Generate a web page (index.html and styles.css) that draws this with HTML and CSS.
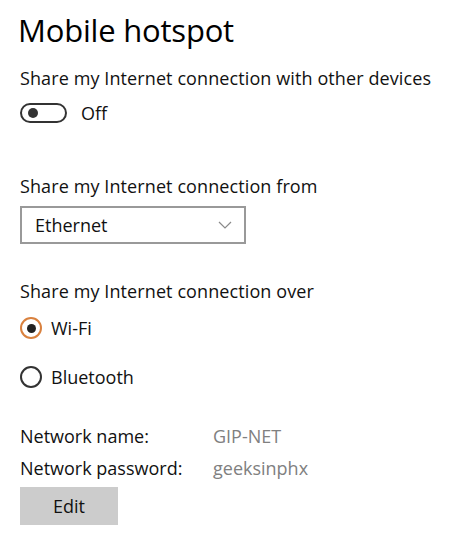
FILE: index.html
```html
<!DOCTYPE html>
<html lang="en">
<head>
    <meta charset="UTF-8">
    <title>Mobile hotspot</title>
    <link rel="stylesheet" href="styles.css">
</head>
<body>
    <h1>Mobile hotspot</h1>

    <p class="label">Share my Internet connection with other devices</p>
    <div class="toggle-row">
        <span class="toggle"><span class="knob"></span></span>
        <span class="toggle-text">Off</span>
    </div>

    <p class="label from">Share my Internet connection from</p>
    <div class="select">
        <span>Ethernet</span>
        <svg width="14" height="8" viewBox="0 0 14 8"><path d="M1 1 L7 7 L13 1" fill="none" stroke="#8a8a8a" stroke-width="1.2"/></svg>
    </div>

    <p class="label over">Share my Internet connection over</p>
    <div class="radio-row">
        <span class="radio checked"><span class="dot"></span></span>
        <span>Wi-Fi</span>
    </div>
    <div class="radio-row">
        <span class="radio"></span>
        <span>Bluetooth</span>
    </div>

    <div class="info">
        <span class="key">Network name:</span><span class="val">GIP-NET</span>
        <span class="key">Network password:</span><span class="val">geeksinphx</span>
    </div>
    <button class="edit">Edit</button>
</body>
</html>
```

FILE: styles.css
```css
body { margin: 0; padding: 0 20px; background: #fff; color: #111; font-family: "Open Sans", "Noto Sans", sans-serif; font-size: 18px; line-height: 24px; }
h1 { font-weight: 400; font-size: 31px; margin: 10px 0 0 -2px; line-height: 40px; color: #000; letter-spacing: -0.2px; }
.label { margin: 0; line-height: 24px; letter-spacing: 0.1px; }
.label:first-of-type { margin-top: 16px; }
.toggle-row { display: flex; align-items: center; height: 24px; margin-top: 11px; }
.toggle { height: 16px; border: 2px solid #333; border-radius: 10px; display: flex; align-items: center; padding-left: 6px; box-sizing: content-box; width: 37px; }
.knob { width: 10px; height: 10px; border-radius: 50%; background: #333; }
.toggle-text { margin-left: 14px; }
.from { margin-top: 49px; }
.select { margin-top: 8px; border: 2px solid #999; display: flex; align-items: center; justify-content: space-between; padding: 0 12px 0 13px; box-sizing: border-box; width: 226px; height: 38px; }
.over { margin-top: 35px; }
.radio-row { display: flex; align-items: center; height: 24px; margin-top: 13px; }
.radio-row + .radio-row { margin-top: 25px; }
.radio { width: 18px; height: 18px; border: 2px solid #333; border-radius: 50%; display: flex; align-items: center; justify-content: center; margin-right: 9px; }
.radio.checked { border-color: #d9813e; }
.dot { width: 9px; height: 9px; border-radius: 50%; background: #222; }
.info { display: grid; grid-template-columns: 193px auto; row-gap: 8px; margin-top: 35px; line-height: 24px; }
.val { color: #808080; }
.edit { margin-top: 7px; width: 98px; height: 38px; border: none; background: #ccc; font-family: inherit; font-size: 18px; color: #111; }
```
